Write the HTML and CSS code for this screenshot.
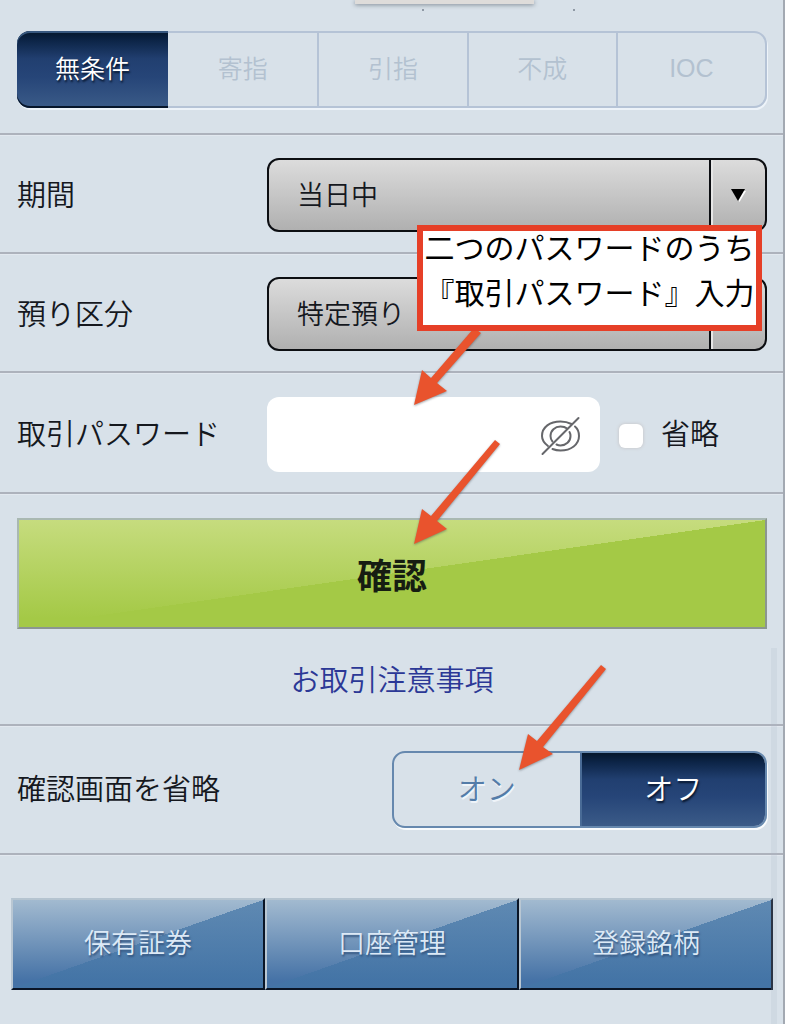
FILE: index.html
```html
<!DOCTYPE html>
<html lang="ja">
<head>
<meta charset="utf-8">
<meta name="viewport" content="width=device-width, initial-scale=1">
<title>注文入力</title>
<link rel="stylesheet" href="styles.css">
</head>
<body>
<main class="page">
  <div class="sheet-edge"></div>
  <span class="speck speck-left"></span>
  <span class="speck speck-right"></span>

  <section class="row row-tabs">
    <div class="tabs">
      <button type="button" class="tab tab-active">無条件</button>
      <button type="button" class="tab" disabled>寄指</button>
      <button type="button" class="tab" disabled>引指</button>
      <button type="button" class="tab" disabled>不成</button>
      <button type="button" class="tab tab-latin" disabled>IOC</button>
    </div>
  </section>

  <section class="row row-field">
    <label class="label" for="period">期間</label>
    <div class="select">
      <select id="period"><option>当日中</option></select>
      <span class="select-arrow"><svg width="18" height="16" viewBox="0 0 18 16"><path d="M4 4H17L10.500 15Z" fill="#fff"/><path d="M2 2H16L9 14Z" fill="#000"/></svg></span>
    </div>
  </section>

  <section class="row row-field">
    <label class="label" for="account">預り区分</label>
    <div class="select">
      <select id="account"><option>特定預り</option></select>
      <span class="select-arrow"><svg width="18" height="16" viewBox="0 0 18 16"><path d="M4 4H17L10.500 15Z" fill="#fff"/><path d="M2 2H16L9 14Z" fill="#000"/></svg></span>
    </div>
  </section>

  <section class="row row-field row-password">
    <label class="label" for="password">取引パスワード</label>
    <div class="password-group">
      <div class="password">
        <input id="password" type="password">
        <button type="button" class="eye" aria-label="パスワードを表示">
          <svg width="42" height="42" viewBox="0 0 42 42" fill="none" stroke="#66676b" stroke-width="2" stroke-linecap="round">
            <path d="M8 31C4 28 2 24 2 21C2 12 10 6.500 20.500 6.500C25 6.500 28.500 7.500 31.500 9"/>
            <path d="M35 11.500C38 14 39 17.500 39 21C39 29.500 31 35.500 20.500 35.500C17.500 35.500 14.500 34.800 12.500 34"/>
            <path d="M12.500 26.500C11 24.800 10.500 22.800 10.500 21C10.500 15.500 15 11.500 20.500 11.500C23.500 11.500 25.500 12.200 27 13.500"/>
            <path d="M29.500 17C30.200 18.200 30.500 19.500 30.500 21C30.500 26.500 26 30.500 20.500 30.500C19 30.500 17.500 30 16.500 29.500"/>
            <path d="M2.500 39L38.500 3"/>
          </svg>
        </button>
      </div>
      <div class="omit">
        <input type="checkbox" id="omit">
        <label class="label" for="omit">省略</label>
      </div>
    </div>
  </section>

  <section class="row row-submit">
    <button type="submit" class="submit">確認</button>
    <a class="notice" href="#">お取引注意事項</a>
  </section>

  <section class="row row-toggle">
    <span class="label">確認画面を省略</span>
    <div class="toggle">
      <button type="button" class="toggle-item">オン</button>
      <button type="button" class="toggle-item toggle-active">オフ</button>
    </div>
  </section>

  <nav class="nav">
    <a href="#">保有証券</a>
    <a href="#">口座管理</a>
    <a href="#">登録銘柄</a>
  </nav>

  <div class="scroll-track"></div>

  <svg class="arrows" width="785" height="1024" viewBox="0 0 785 1024" fill="#e9532d">
    <path d="M474 328L481 333L437 383L447 391L414 405L422 370L431 378Z"/>
    <path d="M495 440L500 444L437 521L447 529L414 544L422 509L431 516Z"/>
    <path d="M601 665L606 669L543 747L553 754L519 770L528 734L537 741Z"/>
  </svg>
  <p class="callout"><span>二つのパスワードのうち</span><span>『取引パスワード』入力</span></p>
</main>
</body>
</html>
```
FILE: styles.css
```css
* { box-sizing: border-box; }

body {
  margin: 0;
  background: #d8e1e9;
  color: #15181e;
  font-family: "Noto Sans CJK JP", sans-serif;
  font-weight: 350;
}

button, input, select { font: inherit; color: inherit; margin: 0; }

.page {
  position: relative;
  min-height: 100vh;
  overflow: hidden;
  border-right: 2px solid #a3a9b2;
}

.sheet-edge {
  position: absolute;
  top: 0;
  left: 355px;
  width: 179px;
  height: 4px;
  background: #dedcda;
  box-shadow: 0 1px 4px rgba(70, 80, 90, 0.6);
}

.speck {
  position: absolute;
  top: 9px;
  width: 2px;
  height: 2px;
  background: #8f99a5;
}
.speck-left { left: 422px; }
.speck-right { left: 573px; }

.row {
  padding: 0 16px 0 17px;
  border-bottom: 2px solid #adb2bc;
  box-shadow: 0 1px 0 #e2e8ef;
}

.row-tabs { padding-top: 31px; padding-bottom: 25px; }

.tabs, .toggle {
  display: grid;
  height: 77px;
  border: 2px solid #b5c3d6;
  border-radius: 13px;
  box-shadow: 1px 2px 0 #edf3f9;
}
.tabs {
  grid-template-columns: repeat(5, 1fr);
  font-size: 25px;
}

.tab {
  padding: 0 0 6px;
  border: 0;
  border-left: 2px solid #b5c3d6;
  background: none;
  color: #b3c1d0;
}
.tab:nth-child(-n+2) { border-left: 0; }
.tab-latin { font-family: "Liberation Sans", sans-serif; padding-bottom: 2px; }

.tab-active, .toggle-active {
  background: linear-gradient(#05172b 0%, #0c2446 12%, #213f70 36%, #264578 60%, #3b5b88 100%);
  color: #fff;
  text-shadow: 1px 2px 2px #06152c;
}
.tab-active {
  margin: -2px 0 -2px -2px;
  border-radius: 13px 0 0 13px;
  box-shadow: inset 0 2px 0 #38587f, inset 0 -2px 0 #06152a;
}

.row-field {
  display: grid;
  grid-template-columns: 1fr 2fr;
  align-items: center;
  padding-top: 23px;
  padding-bottom: 20px;
}

.label { padding-bottom: 4px; font-size: 29px; line-height: 44px; }

.select { position: relative; height: 74px; }
.select select {
  appearance: none;
  width: 100%;
  height: 100%;
  padding: 0 60px 3px 28px;
  border: 2px solid #0c0e12;
  border-radius: 12px;
  background: linear-gradient(#dcdcdc, #b0b0b0);
  font-size: 27px;
}
.select-arrow {
  position: absolute;
  top: 2px;
  right: 2px;
  bottom: 2px;
  width: 56px;
  display: flex;
  align-items: center;
  justify-content: center;
  border-left: 2px solid #0c0e12;
  box-shadow: inset 2px 0 0 #e6e6e6;
  pointer-events: none;
}

.row-password { padding-top: 24px; padding-bottom: 20px; }
.row-password .label { padding-bottom: 6px; }

.password-group { display: flex; align-items: center; gap: 19px; }
.password { position: relative; flex: 9 1 0; height: 75px; }
.password input {
  width: 100%;
  height: 100%;
  padding: 0 68px 0 20px;
  border: 0;
  border-radius: 12px;
  background: #fff;
  font-size: 27px;
}
.eye {
  position: absolute;
  right: 18px;
  top: 18px;
  width: 42px;
  height: 42px;
  padding: 0;
  border: 0;
  background: none;
}
.eye svg { display: block; }

.omit {
  flex: 4 1 0;
  display: flex;
  align-items: center;
  gap: 18px;
}
.omit input {
  appearance: none;
  width: 24px;
  height: 24px;
  margin-top: 3px;
  border-radius: 6px;
  background: #fff;
  box-shadow: 0 0 3px 1px #cdcfd3;
}

.row-submit {
  display: flex;
  flex-direction: column;
  align-items: center;
  gap: 28px;
  padding-top: 24px;
  padding-bottom: 24px;
}
.submit {
  width: 100%;
  height: 111px;
  padding: 0;
  border: 2px solid;
  border-color: #a9b8b2 #8b9690 #8b9690 #a9b8b2;
  background:
    linear-gradient(to bottom right, rgba(255, 255, 255, 0) 50%, #a4c946 50%),
    linear-gradient(#c6dc7e, #a4c946 92%);
  color: #161d12;
  font-size: 35px;
  font-weight: 700;
}
.notice {
  color: #2b3896;
  font-size: 29px;
  line-height: 43px;
  text-decoration: none;
}

.row-toggle {
  display: grid;
  grid-template-columns: 1fr 1fr;
  align-items: center;
  padding-top: 25px;
  padding-bottom: 25px;
}
.row-toggle .label { padding-bottom: 6px; }
.toggle {
  grid-template-columns: 1fr 1fr;
  border-color: #6688ae;
  box-shadow: 1px 2px 0 #f8fbfd;
  font-size: 29px;
}
.toggle-item {
  padding: 0 0 6px;
  border: 0;
  background: none;
  color: #537ca8;
  text-shadow: 1px 2px 0 #eff4f9;
}
.toggle .toggle-active {
  border-left: 2px solid #496b96;
  border-radius: 0 11px 11px 0;
  background: linear-gradient(#05172b 0%, #0c2446 12%, #213f70 36%, #264578 60%, #3b5b88 100%);
  color: #fff;
  text-shadow: 1px 2px 2px #06152c;
}

.nav {
  display: grid;
  grid-template-columns: repeat(3, 1fr);
  padding: 43px 10px 33px 11px;
}
.nav a {
  display: flex;
  align-items: center;
  justify-content: center;
  height: 92px;
  padding-bottom: 5px;
  border: 2px solid;
  border-color: #b5c4d0 #0a1526 #0a1526 #b9c7d3;
  background:
    linear-gradient(to bottom right, rgba(255, 255, 255, 0) 50%, rgba(67, 117, 166, 0.7) 50%),
    linear-gradient(#a2bad0, #4572a6 92%);
  color: #dce9f6;
  font-size: 27px;
  text-decoration: none;
  text-shadow: 1px 2px 2px #34557f;
}

.scroll-track {
  position: absolute;
  top: 648px;
  right: 6px;
  bottom: 0;
  width: 6px;
  background: rgba(175, 185, 200, 0.2);
}

.arrows {
  position: absolute;
  top: 0;
  left: 0;
  pointer-events: none;
  filter: drop-shadow(0 1px 1px rgba(60, 70, 80, 0.5));
}

.callout {
  position: absolute;
  top: 225px;
  left: 417px;
  display: flex;
  flex-direction: column;
  align-items: center;
  gap: 14px;
  width: 345px;
  height: 106px;
  margin: 0;
  border: 6px solid #e63f27;
  background: #fff;
  color: #000;
  font-size: 30px;
  font-weight: 400;
  line-height: 31px;
  white-space: nowrap;
}
```
